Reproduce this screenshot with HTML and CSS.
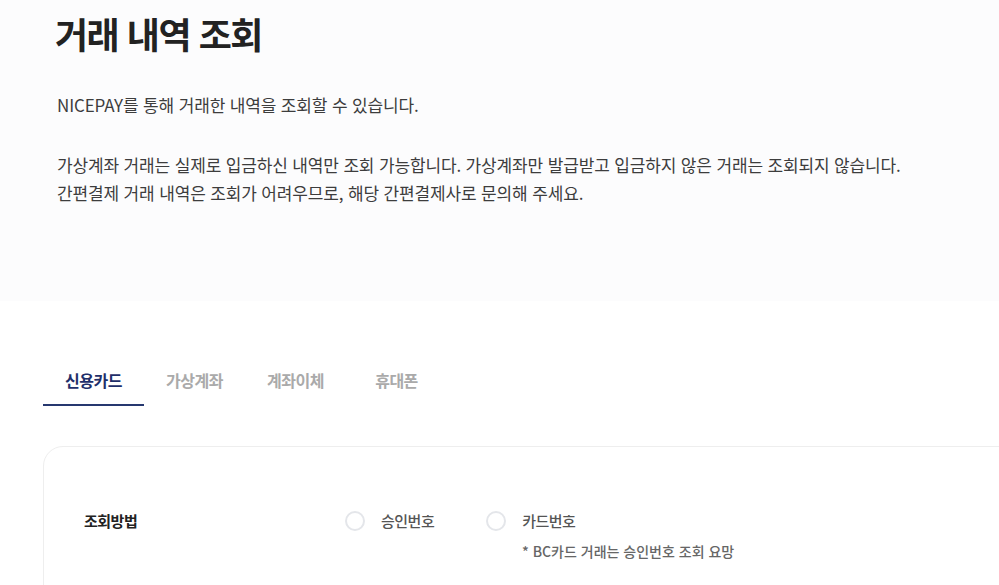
FILE: index.html
```html
<!DOCTYPE html>
<html lang="ko">
<head>
<meta charset="utf-8">
<title>거래 내역 조회</title>
<link rel="stylesheet" href="styles.css">
</head>
<body>
  <section class="intro">
    <h1 class="intro-title">거래 내역 조회</h1>
    <p class="intro-text">NICEPAY를 통해 거래한 내역을 조회할 수 있습니다.</p>
    <p class="intro-text intro-text-gap">가상계좌 거래는 실제로 입금하신 내역만 조회 가능합니다. 가상계좌만 발급받고 입금하지 않은 거래는 조회되지 않습니다.<br>간편결제 거래 내역은 조회가 어려우므로, 해당 간편결제사로 문의해 주세요.</p>
  </section>

  <main class="content">
    <nav class="tabs">
      <a class="tab tab-active">신용카드</a>
      <a class="tab">가상계좌</a>
      <a class="tab">계좌이체</a>
      <a class="tab">휴대폰</a>
    </nav>

    <div class="card">
      <div class="form-row">
        <div class="form-label">조회방법</div>
        <div class="form-field">
          <div class="radio-group">
            <label class="radio"><span class="radio-dot"></span><span class="radio-text">승인번호</span></label>
            <label class="radio"><span class="radio-dot"></span><span class="radio-text">카드번호</span></label>
          </div>
          <p class="form-note">* BC카드 거래는 승인번호 조회 요망</p>
        </div>
      </div>
    </div>
  </main>
</body>
</html>
```

FILE: styles.css
```css
* { box-sizing: border-box; }

html, body {
  margin: 0;
  padding: 0;
  overflow-x: hidden;
}

body {
  font-family: "Noto Sans CJK KR", "Noto Sans", sans-serif;
  background: #ffffff;
  color: #444;
}

.intro {
  background: #fcfcfd;
  height: 301px;
  padding: 10px 0 0 55px;
}

.intro-title {
  margin: 0;
  font-size: 36px;
  line-height: 46px;
  font-weight: 700;
  letter-spacing: -1.5px;
  color: #222;
}

.intro-text {
  margin: 35px 0 0 2px;
  font-size: 17px;
  line-height: 28px;
  letter-spacing: -0.15px;
  color: #3d3d3d;
}

.intro-text-gap {
  margin-top: 32px;
}

.content {
  padding-left: 43px;
}

.tabs {
  display: flex;
  margin-top: 55px;
}

.tab {
  width: 101px;
  height: 50px;
  display: flex;
  align-items: center;
  justify-content: center;
  font-size: 16px;
  font-weight: 700;
  letter-spacing: -0.5px;
  color: #aaaaaa;
  border-bottom: 2px solid transparent;
}

.tab-active {
  color: #1f2f6a;
  border-bottom-color: #26386f;
}

.card {
  margin-top: 40px;
  width: 1000px;
  height: 200px;
  border: 1px solid #eeeeee;
  border-radius: 20px;
  padding: 64px 0 0 40px;
}

.form-row {
  display: flex;
}

.form-label {
  width: 261px;
  font-size: 15px;
  line-height: 20px;
  font-weight: 700;
  letter-spacing: -0.5px;
  color: #222;
}

.form-field {
  display: flex;
  flex-direction: column;
}

.radio-group {
  display: flex;
  gap: 52px;
}

.radio {
  display: flex;
  align-items: center;
}

.radio-dot {
  width: 20px;
  height: 20px;
  border: 2px solid #e4e6ea;
  border-radius: 50%;
  margin-right: 16px;
}

.radio-text {
  font-size: 15px;
  line-height: 20px;
  font-weight: 500;
  letter-spacing: -0.5px;
  color: #555;
}

.form-note {
  margin: 10px 0 0 177px;
  font-size: 14px;
  line-height: 20px;
  font-weight: 500;
  letter-spacing: 0;
  color: #666;
}
```
